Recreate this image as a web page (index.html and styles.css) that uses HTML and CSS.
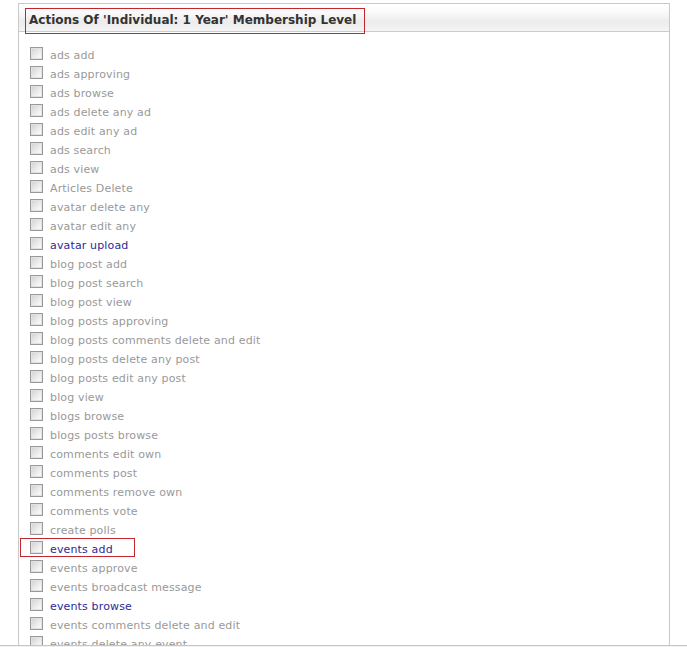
FILE: index.html
```html
<!DOCTYPE html>
<html>
<head>
<meta charset="utf-8">
<link rel="stylesheet" href="styles.css">
</head>
<body>
<div class="page">
  <div class="box">
    <div class="head"><span class="title">Actions Of 'Individual: 1 Year' Membership Level</span></div>
    <ul class="list">
      <li><span class="cb"></span><span class="lbl">ads add</span></li>
      <li><span class="cb"></span><span class="lbl">ads approving</span></li>
      <li><span class="cb"></span><span class="lbl">ads browse</span></li>
      <li><span class="cb"></span><span class="lbl">ads delete any ad</span></li>
      <li><span class="cb"></span><span class="lbl">ads edit any ad</span></li>
      <li><span class="cb"></span><span class="lbl">ads search</span></li>
      <li><span class="cb"></span><span class="lbl">ads view</span></li>
      <li><span class="cb"></span><span class="lbl">Articles Delete</span></li>
      <li><span class="cb"></span><span class="lbl">avatar delete any</span></li>
      <li><span class="cb"></span><span class="lbl">avatar edit any</span></li>
      <li><span class="cb"></span><span class="lbl on">avatar upload</span></li>
      <li><span class="cb"></span><span class="lbl">blog post add</span></li>
      <li><span class="cb"></span><span class="lbl">blog post search</span></li>
      <li><span class="cb"></span><span class="lbl">blog post view</span></li>
      <li><span class="cb"></span><span class="lbl">blog posts approving</span></li>
      <li><span class="cb"></span><span class="lbl">blog posts comments delete and edit</span></li>
      <li><span class="cb"></span><span class="lbl">blog posts delete any post</span></li>
      <li><span class="cb"></span><span class="lbl">blog posts edit any post</span></li>
      <li><span class="cb"></span><span class="lbl">blog view</span></li>
      <li><span class="cb"></span><span class="lbl">blogs browse</span></li>
      <li><span class="cb"></span><span class="lbl">blogs posts browse</span></li>
      <li><span class="cb"></span><span class="lbl">comments edit own</span></li>
      <li><span class="cb"></span><span class="lbl">comments post</span></li>
      <li><span class="cb"></span><span class="lbl">comments remove own</span></li>
      <li><span class="cb"></span><span class="lbl">comments vote</span></li>
      <li><span class="cb"></span><span class="lbl">create polls</span></li>
      <li class="mark"><span class="cb"></span><span class="lbl on">events add</span></li>
      <li><span class="cb"></span><span class="lbl">events approve</span></li>
      <li><span class="cb"></span><span class="lbl">events broadcast message</span></li>
      <li><span class="cb"></span><span class="lbl on">events browse</span></li>
      <li><span class="cb"></span><span class="lbl">events comments delete and edit</span></li>
      <li><span class="cb"></span><span class="lbl">events delete any event</span></li>
    </ul>
  </div>
</div>
<div class="bottomline"></div>
</body>
</html>
```

FILE: styles.css
```css
html, body {
  margin: 0;
  padding: 0;
  background: #fff;
  overflow: hidden;
  height: 647px;
}
body {
  position: relative;
  font-family: "DejaVu Sans", Verdana, sans-serif;
}
.page {
  padding: 3px 0 0 18px;
  width: 652px;
}
.box {
  border: 1px solid #c9c9c9;
  height: 700px;
}
.head {
  height: 28px;
  border-bottom: 1px solid #cccccc;
  background: linear-gradient(to bottom, #ffffff 0%, #fafafa 30%, #ececec 65%, #f4f4f4 100%);
  padding: 4px 0 0 6px;
  box-sizing: border-box;
}
.title {
  display: inline-block;
  height: 26px;
  line-height: 22px;
  padding: 0 8px 0 3px;
  border: 1px solid #c1272d;
  font-size: 12px;
  font-weight: bold;
  color: #333;
  box-sizing: border-box;
}
.list {
  list-style: none;
  margin: 0;
  padding: 14px 0 0 11px;
}
.list li {
  height: 19px;
  display: flex;
  align-items: center;
  position: relative;
}
.cb {
  width: 11px;
  height: 11px;
  border: 1px solid #999;
  background: linear-gradient(135deg, #cfcfcf 0%, #ececec 55%, #ffffff 100%);
  box-shadow: inset 0 0 0 1px #e2e2e2;
  margin-top: -4px;
  flex: none;
}
.lbl {
  margin-left: 7px;
  font-size: 11px;
  color: #999999;
  letter-spacing: 0.15px;
}
.lbl.on {
  color: #2b2b96;
}
.mark::before {
  content: "";
  position: absolute;
  left: -10px;
  top: -2px;
  width: 113px;
  height: 17px;
  border: 1px solid #c1272d;
}
.bottomline {
  position: absolute;
  left: 0;
  top: 645px;
  width: 687px;
  height: 1px;
  background: #c6c6c6;
}
.bottomline::after {
  content: "";
  position: absolute;
  left: 0;
  top: 1px;
  width: 687px;
  height: 1px;
  background: #f0f0f0;
}
```
